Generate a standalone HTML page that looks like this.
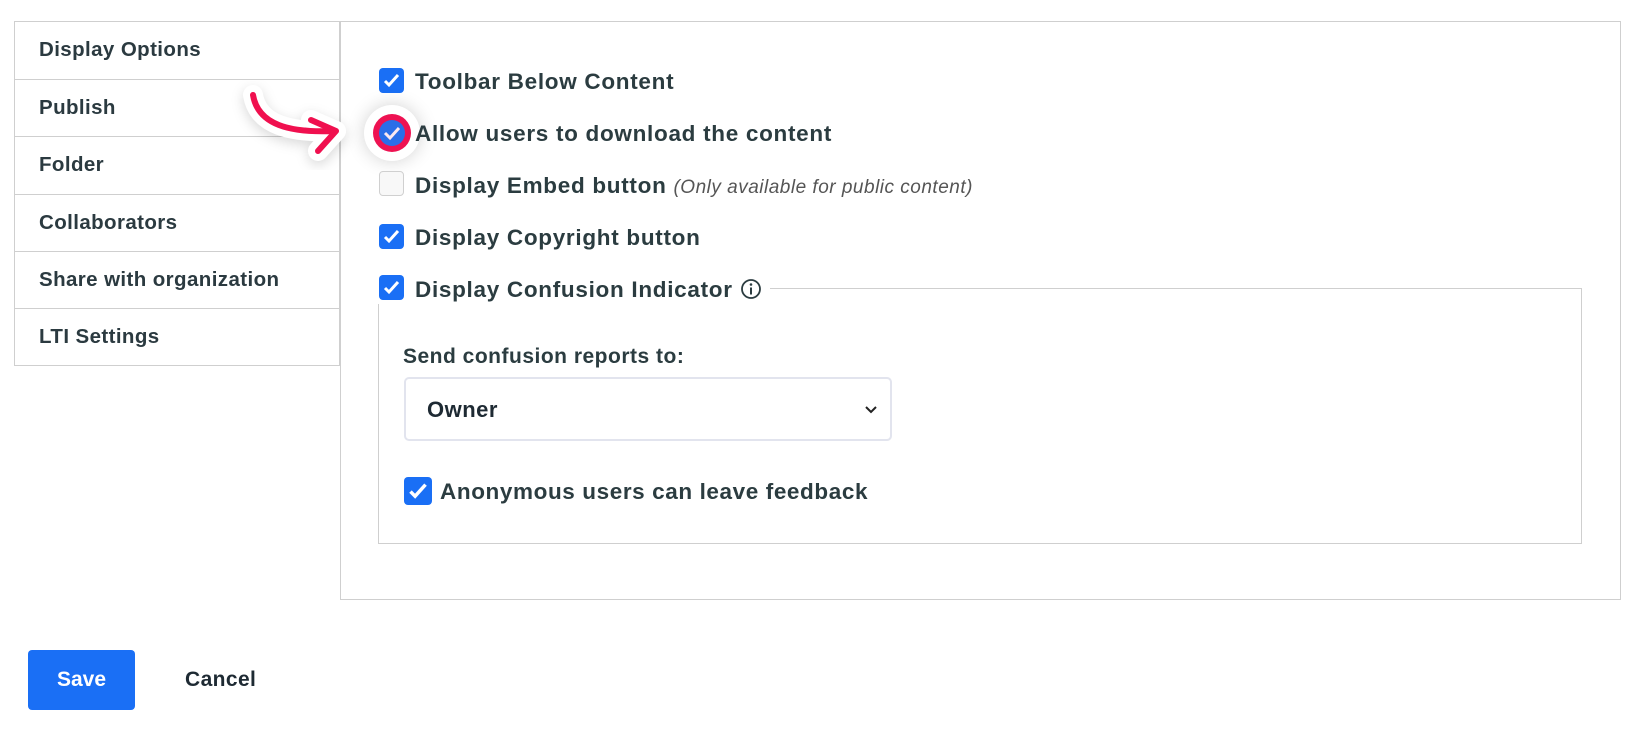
<!DOCTYPE html>
<html><head><meta charset="utf-8"><style>
body{margin:0;width:1643px;height:749px;background:#fff;font-family:"Liberation Sans",sans-serif;position:relative;overflow:hidden;color:#263a3e}
.side{position:absolute;left:14px;top:21px;width:326px;border:1px solid #cfcfcf;box-sizing:border-box}
.side div{height:57.2px;border-top:1px solid #cfcfcf;box-sizing:border-box;padding-left:24px;line-height:56px;font-size:20.5px;letter-spacing:0.4px;font-weight:bold;color:#2b3a40}
.side div:first-child{border-top:none}
.main{position:absolute;left:340px;top:21px;width:1281px;height:579px;border:1px solid #cfcfcf;box-sizing:border-box}
.cb{position:absolute;width:25px;height:25px;border-radius:4px;background:#1a6ff5;box-sizing:border-box}
.cb svg{position:absolute;left:3px;top:3px}
.cb.off{background:#f8f8f8;border:1.5px solid #d0d0d0}
.lbl{position:absolute;font-size:22.5px;letter-spacing:0.7px;font-weight:bold;color:#2b3c40;white-space:nowrap}
.fs{position:absolute;left:378px;top:288px;width:1204px;height:256px;border:1px solid #cfcfcf;box-sizing:border-box}
.sel{position:absolute;left:404px;top:377px;width:488px;height:64px;border:2px solid #e2e4ee;border-radius:5px;box-sizing:border-box}
.btn{position:absolute;left:28px;top:650px;width:107px;height:60px;background:#1a6ff5;border-radius:4px;color:#fff;font-weight:bold;font-size:21px;text-align:center;line-height:60px}
</style></head><body>
<div class="side"><div>Display Options</div><div>Publish</div><div>Folder</div><div>Collaborators</div><div>Share with organization</div><div>LTI Settings</div></div>
<div class="main"></div>
<div class="fs"></div>

<div class="cb" style="left:379px;top:68px"><svg width="19" height="19" viewBox="0 0 19 19"><path d="M3 10l4 4 9-10" stroke="#fff" stroke-width="3" fill="none"/></svg></div>
<div class="lbl" style="left:415px;top:69px">Toolbar Below Content</div>

<div style="position:absolute;left:364px;top:105px;width:56px;height:56px;border-radius:50%;background:#fff;box-shadow:0 0 18px rgba(0,0,0,.18)"></div>
<div style="position:absolute;left:373px;top:114px;width:38px;height:38px;border-radius:50%;background:#ee1252"></div>
<div style="position:absolute;left:379px;top:120px;width:26px;height:26px;border-radius:50%;background:#2a6ee8"><svg width="26" height="26" viewBox="0 0 26 26" style="position:absolute;left:0;top:0"><path d="M6 13l5 5 9-10" stroke="#fce8f0" stroke-width="3" fill="none"/></svg></div>
<div class="lbl" style="left:415px;top:121px">Allow users to download the content</div>

<svg style="position:absolute;left:230px;top:80px" width="130" height="90" viewBox="230 80 130 90">
<g stroke="#fff" stroke-width="20" fill="none" stroke-linecap="round" stroke-linejoin="round" style="filter:drop-shadow(0 4px 6px rgba(0,0,0,.15))"><path d="M253 95 C258 125 290 133 336 131"/><path d="M311 120 L336 131 L318 151"/></g>
<g stroke="#f0104f" stroke-width="6" fill="none" stroke-linecap="round" stroke-linejoin="round"><path d="M253 95 C258 125 290 133 334 131"/><path d="M311 120 L336 131 L318 151"/></g>
</svg>

<div class="cb off" style="left:379px;top:171px"></div>
<div class="lbl" style="left:415px;top:173px">Display Embed button <span style="font-weight:normal;font-style:italic;font-size:19px;letter-spacing:0.5px;color:#555">(Only available for public content)</span></div>

<div class="cb" style="left:379px;top:224px"><svg width="19" height="19" viewBox="0 0 19 19"><path d="M3 10l4 4 9-10" stroke="#fff" stroke-width="3" fill="none"/></svg></div>
<div class="lbl" style="left:415px;top:225px">Display Copyright button</div>

<div style="position:absolute;left:374px;top:272px;width:396px;height:32px;background:#fff"></div>
<div class="cb" style="left:379px;top:275px"><svg width="19" height="19" viewBox="0 0 19 19"><path d="M3 10l4 4 9-10" stroke="#fff" stroke-width="3" fill="none"/></svg></div>
<div class="lbl" style="left:415px;top:277px">Display Confusion Indicator <svg style="vertical-align:-3px;margin-left:0px" width="22" height="22" viewBox="0 0 22 22"><circle cx="11" cy="11" r="9" stroke="#2b3c40" stroke-width="1.8" fill="none"/><rect x="10" y="9.5" width="2" height="7" fill="#2b3c40"/><circle cx="11" cy="6.5" r="1.3" fill="#2b3c40"/></svg></div>

<div class="lbl" style="left:403px;top:345px;font-size:21px;letter-spacing:0.5px">Send confusion reports to:</div>
<div class="sel"><span style="position:absolute;left:21px;top:18px;font-size:22px;letter-spacing:0.5px;font-weight:bold;color:#1e2a33">Owner</span><svg style="position:absolute;left:458px;top:26px" width="14" height="10" viewBox="0 0 14 10"><path d="M2 2l5 5 5-5" stroke="#222" stroke-width="2" fill="none"/></svg></div>

<div class="cb" style="left:404px;top:477px;width:28px;height:28px"><svg width="22" height="22" viewBox="0 0 19 19"><path d="M3 10l4 4 9-10" stroke="#fff" stroke-width="3" fill="none"/></svg></div>
<div class="lbl" style="left:440px;top:479px;letter-spacing:0.6px">Anonymous users can leave feedback</div>

<div class="btn">Save</div>
<div class="lbl" style="left:185px;top:668px;font-size:21px;letter-spacing:0.4px;color:#1e2a33">Cancel</div>
</body></html>
